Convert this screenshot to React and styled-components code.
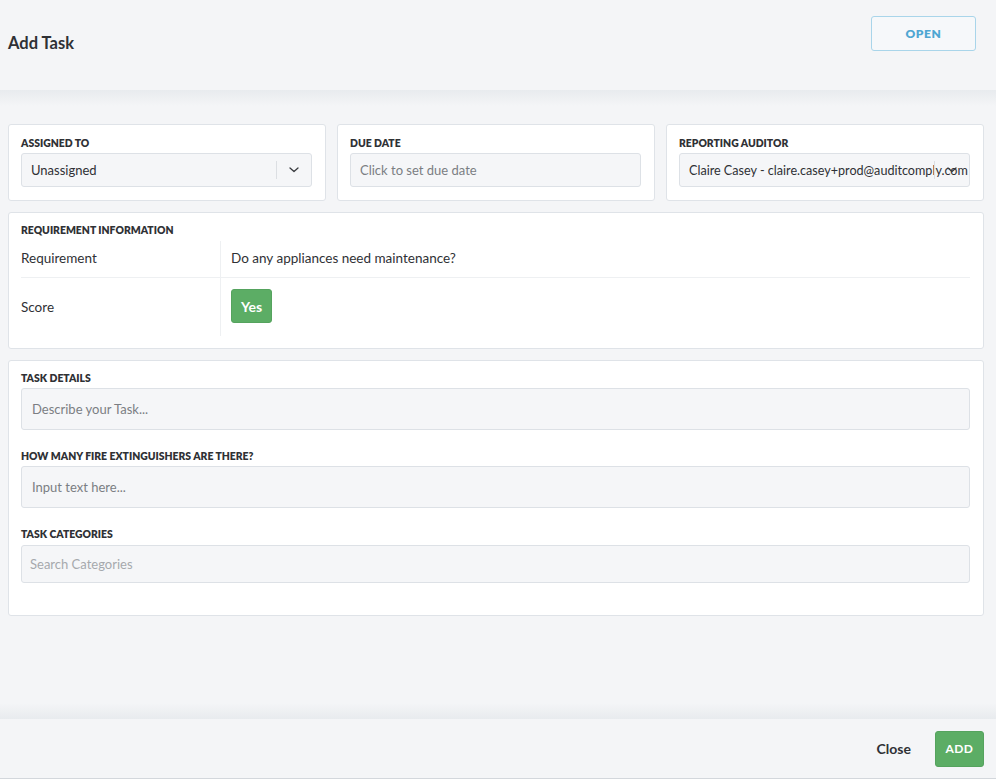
import React from "react";
import styled, { createGlobalStyle } from "styled-components";

const Global = createGlobalStyle`
  html, body { margin: 0; padding: 0; }
  body {
    background: #f4f5f7;
    font-family: Lato, "Open Sans", "Liberation Sans", sans-serif;
    color: #2f3135;
  }
  * { box-sizing: border-box; }
`;

const Page = styled.div`
  height: 779px;
  display: flex;
  flex-direction: column;
  background: #f4f5f7;
  border-bottom: 1px solid #d3d7dc;
`;

const Header = styled.header`
  height: 90px;
  flex: none;
  display: flex;
  align-items: flex-start;
  justify-content: space-between;
  padding: 16px 20px 0 8px;
`;

const Title = styled.h1`
  margin: 17px 0 0;
  font-size: 16.5px;
  line-height: 20px;
  font-weight: 700;
  color: #2f3135;
`;

const OutlineButton = styled.button`
  width: 105px;
  height: 35px;
  background: #f6f8fa;
  border: 1px solid #a9d5ea;
  border-radius: 3px;
  color: #4ea6d2;
  font-family: inherit;
  font-weight: 800;
  font-size: 12px;
  letter-spacing: 0.6px;
`;

const Shade = styled.div`
  flex: none;
  height: 16px;
  background: linear-gradient(${(p) => (p.$up ? "to top" : "to bottom")}, #e8ebee, #f4f5f7);
`;

const Body = styled.main`
  flex: 1;
  padding: 18px 12px 0 8px;
  display: flex;
  flex-direction: column;
  gap: 11px;
`;

const Row = styled.div`
  display: grid;
  grid-template-columns: repeat(3, minmax(0, 1fr));
  gap: 11px;
`;

const Card = styled.section`
  min-width: 0;
  background: #fff;
  border: 1px solid #dfe3e8;
  border-radius: 3px;
  padding: ${(p) => p.$pad || "11px 13px 13px 12px"};
`;

const Label = styled.div`
  font-size: 10.4px;
  line-height: 14px;
  font-weight: 800;
  text-transform: uppercase;
  color: #2f3135;
  margin-bottom: ${(p) => p.$mb || "3px"};
  margin-top: ${(p) => p.$mt || "0"};
`;

const Field = styled.div`
  position: relative;
  height: ${(p) => p.$h || "34px"};
  background: #f5f6f8;
  border: 1px solid #dde1e6;
  border-radius: 3px;
  display: flex;
  align-items: center;
  padding-left: ${(p) => p.$pl || "9px"};
  font-size: ${(p) => p.$fs || "13px"};
  color: ${(p) => p.$color || "#2f3135"};
  overflow: hidden;
  white-space: nowrap;
`;

const FieldText = styled.span`
  flex: 1;
  overflow: hidden;
  white-space: nowrap;
`;

const Indicator = styled.div`
  position: absolute;
  right: 0;
  top: 0;
  bottom: 0;
  width: 35px;
  display: flex;
  align-items: center;
  justify-content: center;
  &::before {
    content: "";
    position: absolute;
    left: 0;
    top: 7px;
    bottom: 7px;
    width: 1px;
    background: #dcdfe3;
  }
`;

const Chevron = () => (
  <svg width="10" height="6" viewBox="0 0 10 6" fill="none">
    <path d="M1 1l4 3.6L9 1" stroke="#3a3c40" strokeWidth="1.3" strokeLinecap="round" strokeLinejoin="round" />
  </svg>
);

const Table = styled.div`
  display: grid;
  grid-template-columns: 200px 1fr;
  margin-top: 4px;
  font-size: 13.5px;
  color: #2f3135;
`;

const Cell = styled.div`
  display: flex;
  align-items: center;
  height: ${(p) => p.$h};
  padding-left: ${(p) => (p.$first ? "0" : "10px")};
  padding-bottom: ${(p) => (p.$last ? "0" : "2px")};
  border-right: ${(p) => (p.$first ? "1px solid #eef0f2" : "none")};
  border-bottom: ${(p) => (p.$last ? "none" : "1px solid #eef0f2")};
`;

const ScoreButton = styled.button`
  height: 34px;
  width: 41px;
  margin-top: -2px;
  background: #5cad65;
  border: 1px solid #55a35e;
  border-radius: 3px;
  color: #fff;
  font-family: inherit;
  font-weight: 700;
  font-size: 14px;
  padding: 0;
`;

const Footer = styled.footer`
  height: 59px;
  flex: none;
  display: flex;
  align-items: center;
  justify-content: flex-end;
  gap: 24px;
  padding: 0 12px 0 8px;
`;

const TextButton = styled.button`
  background: none;
  border: none;
  padding: 0;
  font-family: inherit;
  font-weight: 700;
  font-size: 14px;
  color: #2f3135;
`;

const PrimaryButton = styled.button`
  width: 49px;
  height: 36px;
  background: #5cad65;
  border: 1px solid #55a35e;
  border-radius: 3px;
  color: #fff;
  font-family: inherit;
  font-weight: 700;
  font-size: 12px;
  letter-spacing: 0.4px;
  padding: 0;
`;

export default function App() {
  return (
    <>
      <Global />
      <Page>
        <Header>
          <Title>Add Task</Title>
          <OutlineButton>OPEN</OutlineButton>
        </Header>
        <Shade />
        <Body>
          <Row>
            <Card>
              <Label>Assigned To</Label>
              <Field>
                <FieldText>Unassigned</FieldText>
                <Indicator>
                  <Chevron />
                </Indicator>
              </Field>
            </Card>
            <Card>
              <Label>Due Date</Label>
              <Field $color="#7b7e83">
                <FieldText>Click to set due date</FieldText>
              </Field>
            </Card>
            <Card>
              <Label>Reporting Auditor</Label>
              <Field $fs="12.6px">
                <FieldText>Claire Casey - claire.casey+prod@auditcomply.com</FieldText>
                <Indicator>
                  <Chevron />
                </Indicator>
              </Field>
            </Card>
          </Row>
          <Card $pad="10px 13px 12px 12px">
            <Label $mb="0">Requirement Information</Label>
            <Table>
              <Cell $first $h="37px">Requirement</Cell>
              <Cell $h="37px">Do any appliances need maintenance?</Cell>
              <Cell $first $last $h="58px">Score</Cell>
              <Cell $last $h="58px">
                <ScoreButton>Yes</ScoreButton>
              </Cell>
            </Table>
          </Card>
          <Card $pad="10px 13px 32px 12px">
            <Label>Task Details</Label>
            <Field $h="42px" $pl="10px" $color="#7b7e83">
              Describe your Task...
            </Field>
            <Label $mt="19px">How many fire extinguishers are there?</Label>
            <Field $h="42px" $pl="10px" $color="#7b7e83">
              Input text here...
            </Field>
            <Label $mt="19px" $mb="4px">Task Categories</Label>
            <Field $h="38px" $pl="8px" $color="#a6a9ad">
              Search Categories
            </Field>
          </Card>
        </Body>
        <Shade $up />
        <Footer>
          <TextButton>Close</TextButton>
          <PrimaryButton>ADD</PrimaryButton>
        </Footer>
      </Page>
    </>
  );
}
